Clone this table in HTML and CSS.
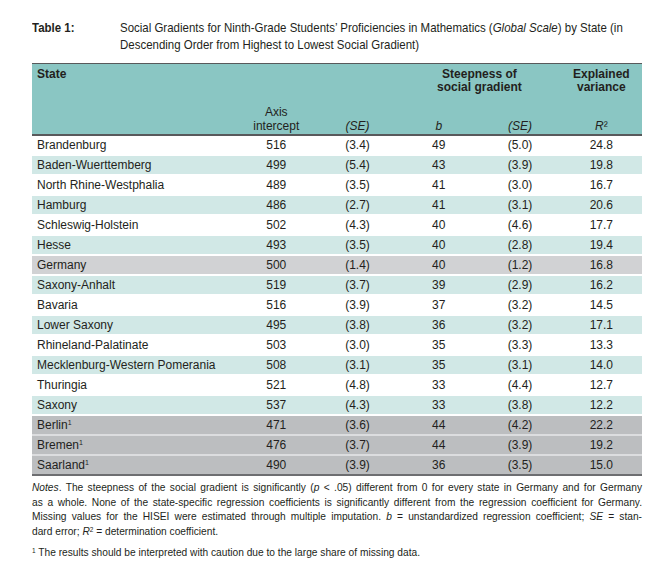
FILE: index.html
```html
<!DOCTYPE html>
<html lang="en">
<head>
<meta charset="utf-8">
<title>Table 1</title>
<link rel="stylesheet" href="styles.css">
</head>
<body>
<div class="page">
  <div class="caption">
    <div class="caption-label"><span class="narrow">Table 1:</span></div>
    <div class="caption-text"><span class="narrow">Social Gradients for Ninth-Grade Students’ Proficiencies in Mathematics (<i>Global Scale</i>) by State (in<br>Descending Order from Highest to Lowest Social Gradient)</span></div>
  </div>
  <table class="data">
    <colgroup>
      <col class="c-state"><col class="c-num"><col class="c-num"><col class="c-num"><col class="c-num"><col class="c-num">
    </colgroup>
    <thead>
      <tr class="h1">
        <th class="left">State</th>
        <th></th>
        <th></th>
        <th colspan="2">Steepness of<br>social gradient</th>
        <th>Explained<br>variance</th>
      </tr>
      <tr class="h2">
        <th></th>
        <th>Axis<br>intercept</th>
        <th><i>(SE)</i></th>
        <th><i>b</i></th>
        <th><i>(SE)</i></th>
        <th><i>R</i>²</th>
      </tr>
    </thead>
    <tbody>
      <tr class="w"><td>Brandenburg</td><td>516</td><td>(3.4)</td><td>49</td><td>(5.0)</td><td>24.8</td></tr>
      <tr class="t"><td>Baden-Wuerttemberg</td><td>499</td><td>(5.4)</td><td>43</td><td>(3.9)</td><td>19.8</td></tr>
      <tr class="w"><td>North Rhine-Westphalia</td><td>489</td><td>(3.5)</td><td>41</td><td>(3.0)</td><td>16.7</td></tr>
      <tr class="t"><td>Hamburg</td><td>486</td><td>(2.7)</td><td>41</td><td>(3.1)</td><td>20.6</td></tr>
      <tr class="w"><td>Schleswig-Holstein</td><td>502</td><td>(4.3)</td><td>40</td><td>(4.6)</td><td>17.7</td></tr>
      <tr class="t"><td>Hesse</td><td>493</td><td>(3.5)</td><td>40</td><td>(2.8)</td><td>19.4</td></tr>
      <tr class="g"><td>Germany</td><td>500</td><td>(1.4)</td><td>40</td><td>(1.2)</td><td>16.8</td></tr>
      <tr class="t"><td>Saxony-Anhalt</td><td>519</td><td>(3.7)</td><td>39</td><td>(2.9)</td><td>16.2</td></tr>
      <tr class="w"><td>Bavaria</td><td>516</td><td>(3.9)</td><td>37</td><td>(3.2)</td><td>14.5</td></tr>
      <tr class="t"><td>Lower Saxony</td><td>495</td><td>(3.8)</td><td>36</td><td>(3.2)</td><td>17.1</td></tr>
      <tr class="w"><td>Rhineland-Palatinate</td><td>503</td><td>(3.0)</td><td>35</td><td>(3.3)</td><td>13.3</td></tr>
      <tr class="t"><td>Mecklenburg-Western Pomerania</td><td>508</td><td>(3.1)</td><td>35</td><td>(3.1)</td><td>14.0</td></tr>
      <tr class="w"><td>Thuringia</td><td>521</td><td>(4.8)</td><td>33</td><td>(4.4)</td><td>12.7</td></tr>
      <tr class="t"><td>Saxony</td><td>537</td><td>(4.3)</td><td>33</td><td>(3.8)</td><td>12.2</td></tr>
      <tr class="d"><td>Berlin<sup>1</sup></td><td>471</td><td>(3.6)</td><td>44</td><td>(4.2)</td><td>22.2</td></tr>
      <tr class="d"><td>Bremen<sup>1</sup></td><td>476</td><td>(3.7)</td><td>44</td><td>(3.9)</td><td>19.2</td></tr>
      <tr class="d last"><td>Saarland<sup>1</sup></td><td>490</td><td>(3.9)</td><td>36</td><td>(3.5)</td><td>15.0</td></tr>
    </tbody>
  </table>
  <div class="notes">
    <span class="jl"><i>Notes</i>. The steepness of the social gradient is significantly (<i>p</i> &lt; .05) different from 0 for every state in Germany and for Germany</span>
    <span class="jl">as a whole. None of the state-specific regression coefficients is significantly different from the regression coefficient for Germany.</span>
    <span class="jl">Missing values for the HISEI were estimated through multiple imputation. <i>b</i> = unstandardized regression coefficient; <i>SE</i> = stan-</span>
    <span class="ll">dard error; <i>R</i><sup>2</sup> = determination coefficient.</span>
  </div>
  <p class="footnote"><sup>1</sup> The results should be interpreted with caution due to the large share of missing data.</p>
</div>
</body>
</html>
```

FILE: styles.css
```css
html, body {
  margin: 0;
  padding: 0;
  background: #ffffff;
}

.page {
  width: 610px;
  margin-left: 32px;
  padding-top: 19px;
  color: #231f20;
  font-family: "Liberation Sans", Arial, sans-serif;
}

.caption {
  display: flex;
  font-size: 13.5px;
  line-height: 17px;
  height: 34px;
  color: #231f20;
}

.narrow {
  display: inline-block;
  white-space: nowrap;
  transform: scaleX(0.85);
  transform-origin: 0 0;
}

.caption-label {
  flex: 0 0 88px;
  font-weight: bold;
  overflow: hidden;
}

.caption-text {
  flex: 1;
  overflow: hidden;
}

.data {
  margin-top: 10px;
  width: 610px;
  border-collapse: separate;
  border-spacing: 0;
  table-layout: fixed;
  border-top: 1px solid #58595b;
  border-bottom: 2px solid #6d6e71;
  font-size: 12px;
}

.c-state { width: 203px; }
.c-num { width: 81px; }

.data th {
  background: #8ac6c3;
  font-weight: bold;
  text-align: center;
  padding: 0 4px;
  line-height: 13px;
}

.data th.left {
  text-align: left;
  padding-left: 5px;
}

.data .h1 th {
  height: 35px;
  vertical-align: top;
  padding-top: 4px;
}

.data .h2 th {
  height: 30px;
  vertical-align: bottom;
  padding-bottom: 1px;
  font-weight: normal;
  line-height: 14px;
  border-bottom: 2px solid #58595b;
}

.data td {
  height: 18px;
  line-height: 18px;
  padding: 0 4px;
  text-align: center;
  border-bottom: 2px solid #ffffff;
  white-space: nowrap;
}

.data td:first-child {
  text-align: left;
  padding-left: 5px;
}

.data td sup {
  font-size: 7px;
  line-height: 0;
  vertical-align: 4px;
}

.w td { background: #ffffff; }
.t td { background: #d1e8e6; }
.g td { background: #d1d2d4; }
.d td {
  background: #bcbec0;
  border-bottom-color: #dcdddf;
}
.last td { border-bottom: none; }

.notes {
  margin-top: 5px;
  font-size: 10.2px;
  line-height: 14.5px;
}

.jl {
  display: block;
  text-align: justify;
  text-align-last: justify;
  white-space: nowrap;
}

.ll {
  display: block;
}

.notes sup, .footnote sup {
  font-size: 6.5px;
  line-height: 0;
  vertical-align: 3px;
}

.footnote {
  margin: 7px 0 0;
  font-size: 10.2px;
  line-height: 14px;
}
```
